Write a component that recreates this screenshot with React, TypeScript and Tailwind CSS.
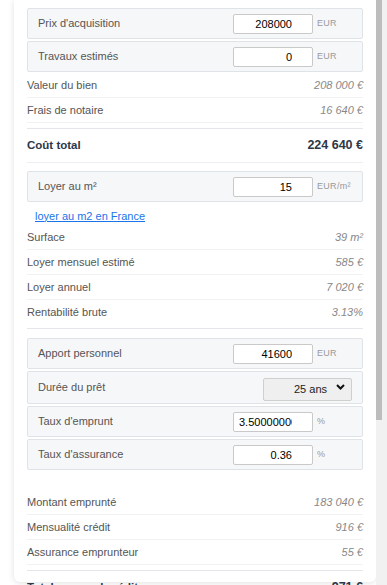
import React from "react";

type InputRowProps = {
  label: string;
  value: string;
  unit: string;
  height?: string;
};

function InputRow({ label, value, unit, height = "h-[31px]" }: InputRowProps) {
  return (
    <div
      className={`flex ${height} items-center rounded-[2px] border border-[#dfe3e8] bg-[#f6f7f9]`}
    >
      <label className="flex-1 pl-[10px] text-[11px] text-[#555]">{label}</label>
      <input
        type="number"
        defaultValue={value}
        className="h-[20px] w-[80px] rounded-[2px] border border-[#c9c9c9] bg-white px-[5px] text-right text-[11px] text-black outline-none"
      />
      <span className="w-[49px] pl-[4px] text-[9px] tracking-[0.3px] text-[#999]">{unit}</span>
    </div>
  );
}

function InfoRow({ label, value }: { label: string; value: string }) {
  return (
    <div className="flex h-[25px] items-center justify-between border-b border-[#f1f2f4] text-[11px]">
      <span className="text-[#555]">{label}</span>
      <span className="italic text-[#888]">{value}</span>
    </div>
  );
}

function TotalRow({ label, value }: { label: string; value: string }) {
  return (
    <div className="flex h-[34px] items-center justify-between border-b border-[#eceef1] font-bold text-[#2d3748]">
      <span className="text-[11.5px]">{label}</span>
      <span className="text-[12.5px]">{value}</span>
    </div>
  );
}

// the page scrollbar, drawn since the headless window hides native ones
function Scrollbar() {
  return (
    <div className="w-[11px] shrink-0 bg-[#f1f1f1]">
      <div className="h-[420px] w-[6px] bg-[#bdbdbd]" />
    </div>
  );
}

export default function App() {
  return (
    <div className="flex h-[585px] overflow-hidden bg-white font-['Liberation_Sans',Arial,sans-serif]">
      <div className="min-w-0 flex-1 overflow-hidden">
        <div className="pl-[14px]">
          <div className="h-[582px] rounded-b-md bg-white px-[13px] pt-[8px] shadow-[0_1px_6px_rgba(0,0,0,0.12)]">
            <div className="flex flex-col gap-[2px]">
              <InputRow label="Prix d'acquisition" value="208000" unit="EUR" />
              <InputRow label="Travaux estimés" value="0" unit="EUR" />
            </div>

            <div className="mt-px">
              <InfoRow label="Valeur du bien" value="208 000 €" />
              <InfoRow label="Frais de notaire" value="16 640 €" />
            </div>

            <div className="mt-[5px] border-t border-[#e4e6ea]">
              <TotalRow label="Coût total" value="224 640 €" />
            </div>

            <div className="mt-[8px]">
              <InputRow label="Loyer au m²" value="15" unit="EUR/m²" />
            </div>

            <div className="flex h-[23px] items-center pl-[8px] pt-[5px]">
              <a href="#" className="text-[11px] text-[#1a73e8] underline">
                loyer au m2 en France
              </a>
            </div>

            <div>
              <InfoRow label="Surface" value="39 m²" />
              <InfoRow label="Loyer mensuel estimé" value="585 €" />
              <InfoRow label="Loyer annuel" value="7 020 €" />
              <div className="flex h-[24px] items-center justify-between text-[11px]">
                <span className="text-[#555]">Rentabilité brute</span>
                <span className="italic text-[#888]">3.13%</span>
              </div>
            </div>

            <div className="mt-[4px] border-t border-[#e4e6ea] pt-[9px]">
              <div className="flex flex-col gap-[2px]">
                <InputRow label="Apport personnel" value="41600" unit="EUR" />
                <div className="flex h-[33px] items-center rounded-[2px] border border-[#dfe3e8] bg-[#f6f7f9]">
                  <label className="flex-1 pl-[10px] text-[11px] text-[#555]">Durée du prêt</label>
                  <div className="relative mr-[10px] h-[23px] w-[89px]">
                    <select
                      defaultValue="25"
                      className="h-full w-full appearance-none rounded-[2px] border border-[#cfcfcf] bg-[#efefef] pr-[24px] text-right text-[11px] text-[#222] outline-none [text-align-last:right]"
                    >
                      <option value="10">10 ans</option>
                      <option value="15">15 ans</option>
                      <option value="20">20 ans</option>
                      <option value="25">25 ans</option>
                    </select>
                    <svg
                      className="pointer-events-none absolute right-[7px] top-[8px]"
                      width="9"
                      height="6"
                      viewBox="0 0 9 6"
                    >
                      <path d="M1 1 L4.5 4.5 L8 1" fill="none" stroke="#111" strokeWidth="2" />
                    </svg>
                  </div>
                </div>
                <InputRow label="Taux d'emprunt" value="3.5000000000000004" unit="%" />
                <InputRow label="Taux d'assurance" value="0.36" unit="%" />
              </div>
            </div>

            <div className="mt-[20px]">
              <InfoRow label="Montant emprunté" value="183 040 €" />
              <InfoRow label="Mensualité crédit" value="916 €" />
              <InfoRow label="Assurance emprunteur" value="55 €" />
            </div>

            <div className="mt-[5px] border-t border-[#e4e6ea]">
              <TotalRow label="Total mensuel crédit" value="971 €" />
            </div>
          </div>
        </div>
      </div>
      <Scrollbar />
    </div>
  );
}
